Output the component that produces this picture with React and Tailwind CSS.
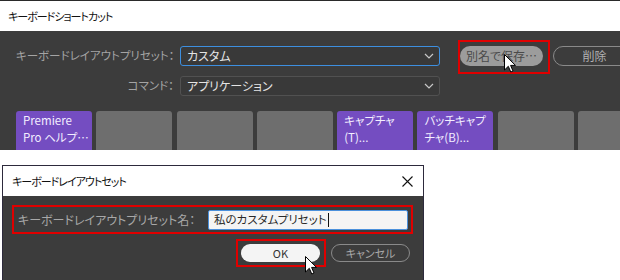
import React from 'react';

const jp = "font-['Noto_Sans_CJK_JP','Noto_Sans',sans-serif] [font-feature-settings:'palt']";

function Chevron() {
  return (
    <svg width="10" height="6" viewBox="0 0 10 6" className="shrink-0">
      <path d="M1 1 L5 5 L9 1" fill="none" stroke="#c8c8c8" strokeWidth="1.2" />
    </svg>
  );
}

function Cursor({ className }) {
  return (
    <svg width="12" height="19" viewBox="0 0 12 19" className={className}>
      <path d="M0.5 0.5 L0.5 16 L4.3 12.3 L6.8 18 L9 17 L6.6 11.4 L11.5 11.4 Z" fill="#fff" stroke="#000" strokeWidth="1" strokeLinejoin="round" />
    </svg>
  );
}

function Select({ value, focused }) {
  return (
    <div
      className={`flex h-[20px] w-[260px] shrink-0 items-center justify-between rounded-[3px] border bg-[#393939] pl-[6px] pr-[5px] text-[12px] text-[#e4e4e4] ${
        focused ? 'border-[#3d8fe0]' : 'border-[#515151]'
      }`}
    >
      <span>{value}</span>
      <Chevron />
    </div>
  );
}

const tiles = [
  { purple: true, lines: ['Premiere', 'Pro ヘルプ…'] },
  { purple: false },
  { purple: false },
  { purple: false },
  { purple: true, lines: ['キャプチャ', '(T)...'] },
  { purple: true, lines: ['バッチキャプ', 'チャ(B)...'] },
  { purple: false },
  { purple: false },
];

export default function App() {
  return (
    <div className={`h-[280px] w-[620px] overflow-hidden bg-white ${jp}`}>
      {/* keyboard shortcut window */}
      <div className="border-t border-[#2a2a2a]">
        <div className="flex h-[30px] items-center bg-white pl-[8px] text-[11px] tracking-[-1px] text-[#111]">キーボードショートカット</div>
        <div className="h-[119px] bg-[#3c3c3c] pl-[16px] pt-[15px]">
          <div className="flex items-center">
            <div className="w-[158px] shrink-0 whitespace-nowrap text-right text-[11.5px] text-[#a4a4a4]">キーボードレイアウトプリセット：</div>
            <div className="ml-[6px] shrink-0">
              <Select value="カスタム" focused />
            </div>
            <div className="relative ml-[20px] shrink-0">
              <div className="flex h-[20px] w-[83px] items-center justify-center rounded-full bg-[#9c9c9c] text-[12px] text-[#4a4a4a]">別名で保存…</div>
              <div className="absolute left-[-2px] top-[-6px] h-[34px] w-[92px] border-2 border-[#e00000]" />
              <Cursor className="absolute left-[44px] top-[8px]" />
            </div>
            <div className="ml-[10px] flex h-[20px] w-[83px] shrink-0 items-center justify-center rounded-full border border-[#8a8a8a] text-[12px] text-[#b2b2b2]">削除</div>
          </div>
          <div className="mt-[10px] flex items-center">
            <div className="w-[158px] shrink-0 whitespace-nowrap text-right text-[11.5px] text-[#a4a4a4]">コマンド：</div>
            <div className="ml-[6px] shrink-0">
              <Select value="アプリケーション" />
            </div>
          </div>
          <div className="mt-[15px] flex gap-[4.3px]">
            {tiles.map((t, i) => (
              <div
                key={i}
                className={`h-[39px] w-[76px] shrink-0 rounded-t-[3px] px-[7px] pt-[1px] text-[11.5px] leading-[17px] text-[#f3eeff] ${
                  t.purple ? 'bg-[#744dc1]' : 'bg-[#6e6e6e]'
                }`}
              >
                {t.lines && t.lines.map((l) => <div key={l} className="whitespace-nowrap">{l}</div>)}
              </div>
            ))}
          </div>
        </div>
      </div>

      {/* save layout dialog */}
      <div className="ml-[2px] mt-[15px] h-[120px] w-[422px] border border-b-0 border-[#2d2a3c]">
        <div className="flex h-[30px] items-center justify-between bg-white pl-[9px] pr-[10px] text-[11px] tracking-[-1px] text-[#111]">
          <span>キーボードレイアウトセット</span>
          <svg width="11" height="11" viewBox="0 0 11 11">
            <path d="M0.5 0.5 L10.5 10.5 M10.5 0.5 L0.5 10.5" stroke="#111" strokeWidth="1.1" />
          </svg>
        </div>
        <div className="h-[90px] bg-[#3c3c3c] pl-[9px] pt-[9px]">
          <div className="flex h-[29px] w-[401px] items-center justify-between border-2 border-[#e00000] pl-[4px] pr-[3px]">
            <span className="whitespace-nowrap text-[12px] text-[#a8a8a8]">キーボードレイアウトプリセット名：</span>
            <div className="flex h-[20px] w-[200px] shrink-0 items-center rounded-[2px] border border-[#4a90dc] bg-[#f4f4f4] pl-[5px] text-[11.5px] text-[#2a2a2a]">
              私のカスタムプリセット
              <span className="ml-[1px] inline-block h-[14px] w-[1px] bg-[#111]" />
            </div>
          </div>
          <div className="mt-[10px] flex w-[398px] justify-end gap-[11px]">
            <div className="relative">
              <div className="flex h-[18px] w-[79px] items-center justify-center rounded-full bg-[#f4f4f4] text-[11px] text-[#333]">OK</div>
              <div className="absolute left-[-5px] top-[-5px] h-[28px] w-[90px] border-2 border-[#e00000]" />
              <Cursor className="absolute left-[64px] top-[12px]" />
            </div>
            <div className="flex h-[18px] w-[79px] items-center justify-center rounded-full border border-[#8a8a8a] text-[11px] text-[#a8a8a8]">キャンセル</div>
          </div>
        </div>
      </div>
    </div>
  );
}
